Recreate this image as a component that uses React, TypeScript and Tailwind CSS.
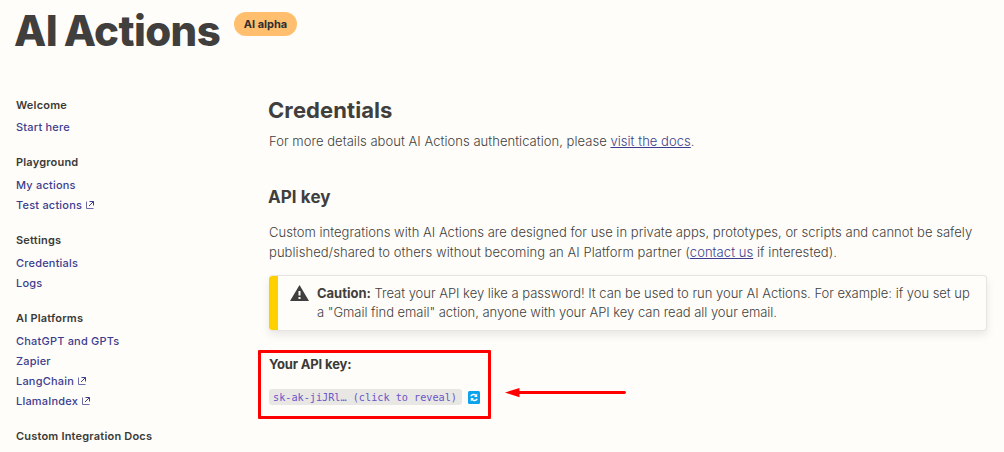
type NavItem = { label: string; external?: boolean };

const sections: { title: string; gap: string; items: NavItem[] }[] = [
  { title: 'Welcome', gap: 'mt-0.5', items: [{ label: 'Start here' }] },
  { title: 'Playground', gap: 'mt-[3px]', items: [{ label: 'My actions' }, { label: 'Test actions', external: true }] },
  { title: 'Settings', gap: 'mt-[3px]', items: [{ label: 'Credentials' }, { label: 'Logs' }] },
  {
    title: 'AI Platforms',
    gap: 'mt-[3px]',
    items: [
      { label: 'ChatGPT and GPTs' },
      { label: 'Zapier' },
      { label: 'LangChain', external: true },
      { label: 'LlamaIndex', external: true },
    ],
  },
  { title: 'Custom Integration Docs', gap: 'mt-[3px]', items: [] },
];

function ExternalIcon() {
  return (
    <svg className="ml-1 size-2" viewBox="0 0 8 8" fill="none" stroke="currentColor" strokeWidth="1">
      <path d="M.5 .5V7.5H7.5" opacity=".75" />
      <path d="M3.5 .5H7.5V4.5M7.3 .7L3 5" />
    </svg>
  );
}

function Sidebar() {
  return (
    <nav className="w-[253px] shrink-0 text-[11px] leading-5 font-medium tracking-[0.2px] text-[#3d3d8f]">
      {sections.map((s) => (
        <section key={s.title} className="mb-[15px]">
          <h2 className="font-semibold text-[#3a3a38]">{s.title}</h2>
          <ul className={s.gap}>
            {s.items.map((item) => (
              <li key={item.label} className="flex items-center whitespace-nowrap">
                <a>{item.label}</a>
                {item.external && <ExternalIcon />}
              </li>
            ))}
          </ul>
        </section>
      ))}
    </nav>
  );
}

function Caution() {
  return (
    <div className="mt-[13px] flex h-14 w-[718px] overflow-hidden rounded border border-l-0 border-[#e6e5e3] bg-[#fffdf9] shadow-[0_4px_8px_rgba(0,0,0,0.09)]">
      <div className="w-[9px] shrink-0 bg-[#ffd000]" />
      <svg className="mt-[9px] ml-3 h-4 w-[19px] shrink-0" viewBox="0 0 19 16">
        <path d="M9.5 0L19 16H0Z" fill="#413f3d" />
        <path d="M8.5 6H10.5V10.6H8.5ZM8.5 12H10.5V14H8.5Z" fill="#fffdf9" />
      </svg>
      <div className="mt-2 ml-2 text-[13px] leading-[19px] whitespace-nowrap">
        <p className="tracking-[-0.02px]">
          <strong className="font-bold">Caution:</strong> Treat your API key like a password! It can be used to run your AI
          Actions. For example: if you set up
        </p>
        <p className="tracking-[-0.035px]">a "Gmail find email" action, anyone with your API key can read all your email.</p>
      </div>
    </div>
  );
}

function ApiKey() {
  return (
    <div className="relative mt-[23px] w-fit">
      <h4 className="text-[13px] leading-5 font-bold tracking-[-0.15px] text-[#3a3a38]">Your API key:</h4>
      <div className="mt-[15px] flex items-center gap-[6px]">
        <code className="h-4 w-[193px] rounded-[3px] bg-[#e8e7e4] pl-1 font-['DejaVu_Sans_Mono',monospace] text-[10.2px] leading-[17px] whitespace-nowrap text-[#6a55c8]">
          sk-ak-jiJRl… (click to reveal)
        </code>
        <svg className="h-[13px] w-[12px]" viewBox="0 0 13 13" fill="none" preserveAspectRatio="none">
          <rect width="13" height="13" rx="1.5" fill="#0aa3ec" />
          <path d="M3 5.3C3.8 3.4 7 2.8 9 4.8M10 7.7C9.2 9.6 6 10.2 4 8.2" stroke="#fff" strokeWidth="1.5" />
          <path d="M10 2.5V6H6.6ZM3 10.5V7H6.4Z" fill="#fff" />
        </svg>
      </div>
      <div className="absolute -top-1 -left-[11px] h-[69px] w-[233px] rounded-[1px] border-3 border-[#fe0000]" />
      <svg className="absolute top-[31px] left-[236px] h-[14px] w-[121px]" viewBox="0 0 121 14">
        <path d="M10 7.5H119.5" stroke="#fe0000" strokeWidth="2.8" strokeLinecap="round" />
        <path d="M0 7.5L14.5 3V12.3Z" fill="#fe0000" />
      </svg>
    </div>
  );
}

export default function App() {
  return (
    <div className="h-[452px] w-[1004px] overflow-hidden bg-[#fffdf9] pl-4 font-['Inter',sans-serif] text-[#413f3d]">
      <header className="flex h-[95px] items-start pt-[7px]">
        <h1 className="-ml-[2px] w-[220px] text-[42px] leading-[48px] font-extrabold tracking-[-0.6px] [word-spacing:-2px] whitespace-nowrap">
          AI Actions
        </h1>
        <span className="mt-[5px] h-6 w-[63px] rounded-full bg-[#ffbf6e] text-center text-[11px] leading-6 font-bold whitespace-nowrap text-[#2d2e2e]">
          AI alpha
        </span>
      </header>
      <div className="flex">
        <Sidebar />
        <main className="text-[13px] leading-5 font-light whitespace-nowrap">
          <h2 className="-mt-px -ml-px text-[22px] leading-8 font-bold tracking-[0.09px]">Credentials</h2>
          <p className="mt-[5px] tracking-[0.04px]">
            For more details about AI Actions authentication, please{' '}
            <a className="text-[#3d3d8f] underline underline-offset-1">visit the docs</a>.
          </p>
          <h3 className="mt-[34px] -ml-px text-[17px] leading-6 font-bold tracking-[0.08px]">API key</h3>
          <p className="mt-[13px] tracking-[0.025px]">
            Custom integrations with AI Actions are designed for use in private apps, prototypes, or scripts and cannot be
            safely
          </p>
          <p className="tracking-[0.055px]">
            published/shared to others without becoming an AI Platform partner (
            <a className="text-[#3d3d8f] underline underline-offset-1">contact us</a> if interested).
          </p>
          <Caution />
          <ApiKey />
        </main>
      </div>
    </div>
  );
}
